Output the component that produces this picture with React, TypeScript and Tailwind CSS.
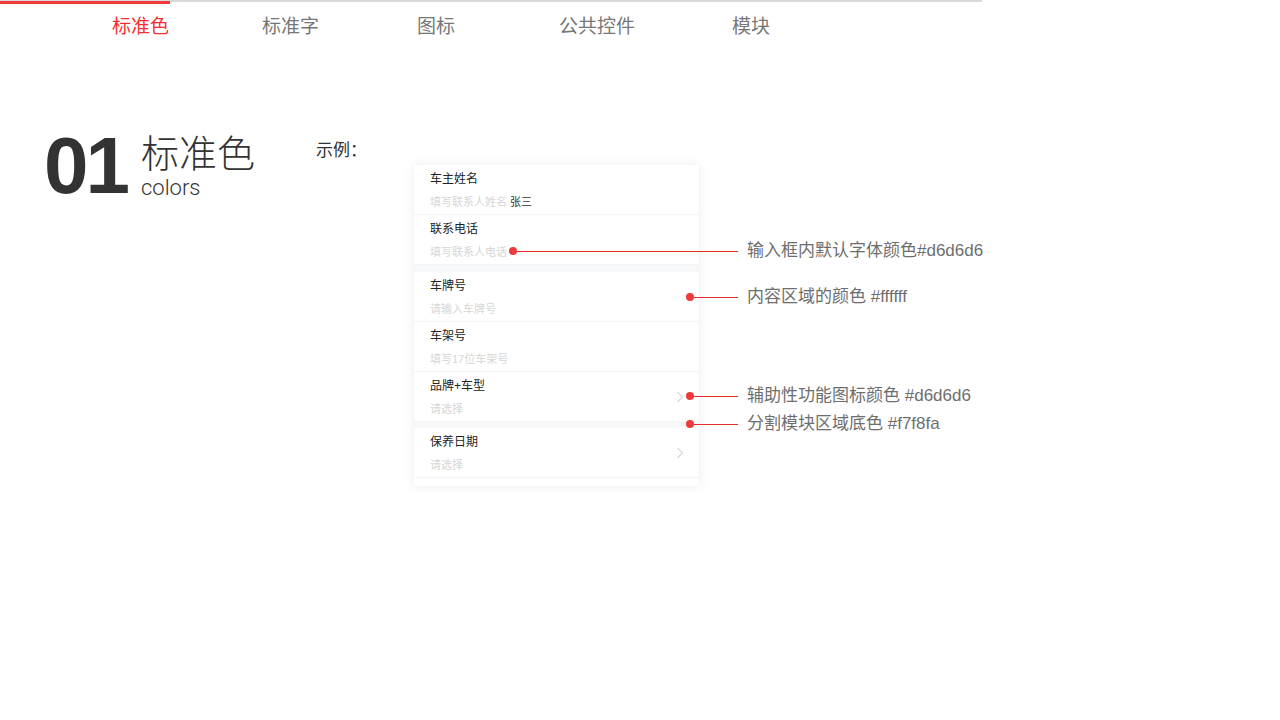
const tabs = [
  { label: '标准色', active: true, ml: 'ml-0' },
  { label: '标准字', active: false, ml: 'ml-[93px]' },
  { label: '图标', active: false, ml: 'ml-[98px]' },
  { label: '公共控件', active: false, ml: 'ml-[104px]' },
  { label: '模块', active: false, ml: 'ml-[97px]' },
];

function Chevron() {
  return (
    <svg width="8" height="12" viewBox="0 0 8 12" fill="none">
      <path d="M1.5 1 L6.5 6 L1.5 11" stroke="#d6d6d6" strokeWidth="1.1" />
    </svg>
  );
}

function Row({ label, hint, value, arrow }: { label: string; hint: string; value?: string; arrow?: boolean }) {
  return (
    <div className="h-[50px] pl-[16px] pr-[15px] flex items-center justify-between border-b border-[#f4f4f4]">
      <div className="pt-[6px] self-start">
        <div className="text-[12px] leading-[16px] text-[#222]">{label}</div>
        <div className="mt-[7px] text-[11px] leading-[16px] text-[#d6d6d6]">
          {hint}
          {value && <span className="ml-[3px] text-[#333]">{value}</span>}
        </div>
      </div>
      {arrow && <Chevron />}
    </div>
  );
}

function Note({ left, top, line, text }: { left: string; top: string; line: string; text: string }) {
  return (
    <div className={`absolute ${left} ${top} h-[22px] flex items-center`}>
      <div className="w-[8px] h-[8px] rounded-full bg-[#ee3a3a]" />
      <div className={`${line} h-px bg-[#e62e2e]`} />
      <span className="ml-[9px] text-[17px] leading-[22px] text-[#6e6e6e] whitespace-nowrap">{text}</span>
    </div>
  );
}

export default function App() {
  return (
    <div className="relative w-[1280px] h-[720px] bg-white overflow-hidden font-['Liberation_Sans','Noto_Sans_CJK_SC',sans-serif]">
      {/* top nav */}
      <div className="relative w-[982px] h-[2px] bg-[#dadada]">
        <div className="absolute left-0 top-[1px] w-[170px] h-[3px] bg-[#f03a3a]" />
      </div>
      <div className="flex pl-[112px] pt-[14px]">
        {tabs.map((t) => (
          <span
            key={t.label}
            className={`${t.ml} text-[19px] leading-[22px] ${t.active ? 'text-[#f52f2f]' : 'text-[#777]'}`}
          >
            {t.label}
          </span>
        ))}
      </div>

      {/* content */}
      <div className="flex mt-[88px]">
        <div className="w-[316px] pl-[44px] flex items-start">
          <div className="text-[80px] leading-[80px] font-bold text-[#333] tracking-[-3px]">01</div>
          <div className="ml-[14px] mt-[9px] text-[#333]">
            <div className="text-[38px] leading-[38px] font-light">标准色</div>
            <div className="mt-[4px] text-[22px] leading-[22px] font-light font-['Roboto','Liberation_Sans',sans-serif]">colors</div>
          </div>
        </div>
        <div>
          <div className="mt-[14px] text-[17px] leading-[22px] text-[#333]">示例：</div>
          <div className="ml-[98px] mt-[3px] w-[285px] bg-white shadow-[0_0_10px_rgba(0,0,0,0.08)]">
            <Row label="车主姓名" hint="填写联系人姓名" value="张三" />
            <Row label="联系电话" hint="填写联系人电话" />
            <div className="h-[7px] bg-[#f7f8fa]" />
            <Row label="车牌号" hint="请输入车牌号" />
            <Row label="车架号" hint="填写17位车架号" />
            <Row label="品牌+车型" hint="请选择" arrow />
            <div className="h-[6px] bg-[#f7f8fa]" />
            <Row label="保养日期" hint="请选择" arrow />
            <div className="h-[8px]" />
          </div>
        </div>
      </div>

      {/* callouts */}
      <Note left="left-[509px]" top="top-[240px]" line="w-[221px]" text="输入框内默认字体颜色#d6d6d6" />
      <Note left="left-[686px]" top="top-[286px]" line="w-[44px]" text="内容区域的颜色 #ffffff" />
      <Note left="left-[686px]" top="top-[385px]" line="w-[44px]" text="辅助性功能图标颜色 #d6d6d6" />
      <Note left="left-[686px]" top="top-[413px]" line="w-[44px]" text="分割模块区域底色 #f7f8fa" />
    </div>
  );
}
